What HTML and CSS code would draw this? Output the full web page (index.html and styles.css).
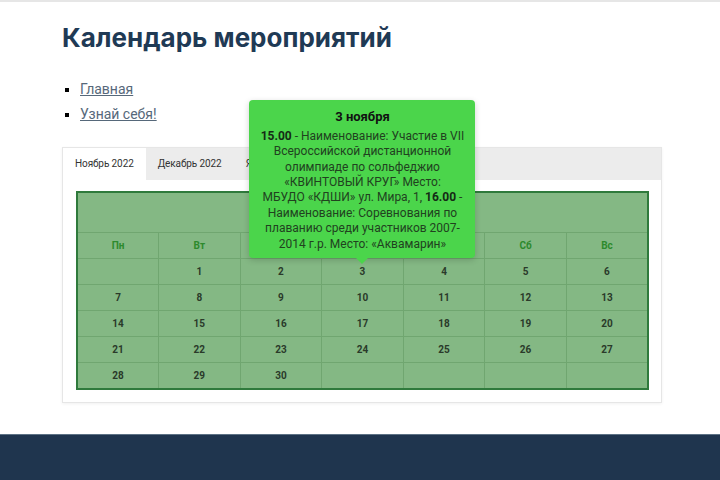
FILE: index.html
```html
<!DOCTYPE html>
<html lang="ru">
<head>
    <meta charset="UTF-8">
    <title>Календарь мероприятий</title>
    <link rel="stylesheet" href="styles.css">
</head>
<body>
    <div class="page">
        <h1>Календарь мероприятий</h1>

        <ul class="crumbs">
            <li><a href="#">Главная</a></li>
            <li><a href="#">Узнай себя!</a></li>
        </ul>

        <!-- Вкладки по месяцам -->
        <div class="tabs">
            <div class="tab-bar">
                <span class="tab active">Ноябрь 2022</span>
                <span class="tab">Декабрь 2022</span>
                <span class="tab">Январь 2023</span>
            </div>
            <div class="tab-panel">
                <table class="cal">
                    <tr>
                        <th class="month" colspan="7">Ноябрь 2022</th>
                    </tr>
                    <tr class="days">
                        <th>Пн</th><th>Вт</th><th>Ср</th><th>Чт</th><th>Пт</th><th>Сб</th><th>Вс</th>
                    </tr>
                    <tr>
                        <td></td><td>1</td><td>2</td>
                        <td class="event">3
                            <div class="tip">
                                <div class="tip-title">3 ноября</div>
                                <b>15.00</b> - Наименование: Участие в VII Всероссийской дистанционной олимпиаде по сольфеджио «КВИНТОВЫЙ КРУГ» Место:<br>МБУДО «КДШИ» ул. Мира, 1, <b>16.00</b> - Наименование: Соревнования по плаванию среди участников 2007-2014 г.р. Место: «Аквамарин»
                            </div>
                        </td>
                        <td>4</td><td>5</td><td>6</td>
                    </tr>
                    <tr>
                        <td>7</td><td>8</td><td>9</td><td>10</td><td>11</td><td>12</td><td>13</td>
                    </tr>
                    <tr>
                        <td>14</td><td>15</td><td>16</td><td>17</td><td>18</td><td>19</td><td>20</td>
                    </tr>
                    <tr>
                        <td>21</td><td>22</td><td>23</td><td>24</td><td>25</td><td>26</td><td>27</td>
                    </tr>
                    <tr>
                        <td>28</td><td>29</td><td>30</td><td></td><td></td><td></td><td></td>
                    </tr>
                </table>
            </div>
        </div>
    </div>

    <footer class="footer"></footer>
</body>
</html>
```

FILE: styles.css
```css
body {
    margin: 0;
    font-family: Roboto, "Liberation Sans", sans-serif;
    border-top: 2px solid #e6e6e6;
    background: #fff;
}
.page {
    width: 600px;
    margin-left: 62px;
}
h1 {
    margin: 0;
    padding-top: 20px;
    font-family: Inter, Roboto, sans-serif;
    font-size: 26px;
    line-height: 32px;
    font-weight: 700;
    color: #1f3a55;
}
.crumbs {
    margin: 23px 0 0;
    padding-left: 18px;
    list-style: square;
    font-size: 14px;
    line-height: 25px;
}
.crumbs a {
    color: #56687a;
}
.tabs {
    margin-top: 20px;
    border: 1px solid #e6e6e6;
    box-shadow: 0 1px 3px rgba(0, 0, 0, 0.06);
}
.tab-bar {
    display: flex;
    background: #ececec;
    height: 32px;
}
.tab {
    padding: 0 12px;
    font-size: 10px;
    letter-spacing: -0.1px;
    line-height: 32px;
    color: #333;
}
.tab.active {
    background: #fff;
}
.tab-panel {
    padding: 11px 12px 12px 13px;
}
.cal {
    width: 100%;
    border-collapse: collapse;
    border: 2px solid #2f7a3c;
    background: #84b884;
    table-layout: fixed;
    font-size: 10px;
    font-weight: 700;
    color: #2a3a2a;
}
.cal th,
.cal td {
    border: 1px solid #70a670;
    text-align: center;
    height: 25px;
    padding: 0;
}
.cal .month {
    height: 39px;
    font-size: 14px;
    color: #1f3a1f;
}
.cal .days th {
    color: #2d8a2d;
}
.event {
    position: relative;
}
.tip {
    position: absolute;
    bottom: 100%;
    margin-bottom: 1px;
    left: 50%;
    transform: translateX(-50%);
    width: 206px;
    padding: 8px 10px 6px;
    background: #4bd54b;
    border-radius: 4px;
    box-shadow: 0 2px 6px rgba(0, 0, 0, 0.18);
    font-size: 12px;
    line-height: 15.4px;
    font-weight: 400;
    color: #21421f;
    z-index: 2;
}
.tip b {
    color: #152a15;
}
.tip::after {
    content: "";
    position: absolute;
    top: 100%;
    left: 50%;
    margin-left: -6px;
    border: 6px solid transparent;
    border-top-color: #4bd54b;
}
.tip-title {
    font-size: 13px;
    font-weight: 700;
    color: #111;
    line-height: 18px;
    margin-bottom: 3px;
}
.footer {
    margin-top: 31px;
    height: 60px;
    background: #1f354e;
    border-top: 1px solid #5d7285;
}
```
